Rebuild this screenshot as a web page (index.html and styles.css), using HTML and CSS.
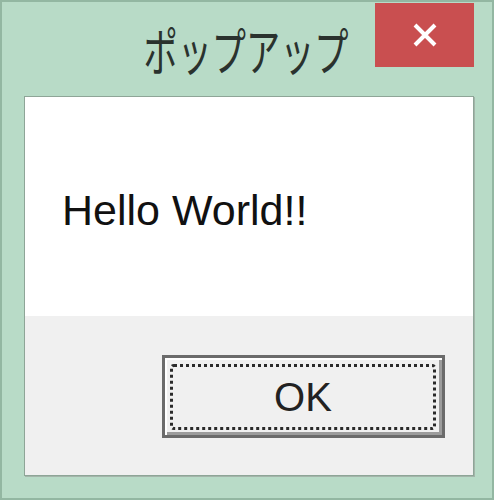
FILE: index.html
```html
<!DOCTYPE html>
<html lang="ja">
<head>
    <meta charset="UTF-8">
    <title>ポップアップ</title>
    <link rel="stylesheet" href="styles.css">
</head>
<body>
    <div class="window">
        <div class="titlebar">
            <div></div>
            <div class="title"><span>ポップアップ</span></div>
            <button class="close-button" aria-label="閉じる">
                <svg width="28" height="24" viewBox="0 0 28 24">
                    <path d="M4 2 L24 22 M24 2 L4 22" stroke="#fff" stroke-width="4" fill="none"/>
                </svg>
            </button>
        </div>

        <div class="client">
            <!-- メッセージ -->
            <div class="message">Hello World!!</div>
            <!-- ボタン -->
            <div class="footer">
                <button class="ok-button"><span>OK</span></button>
            </div>
        </div>
    </div>
</body>
</html>
```

FILE: styles.css
```css
/* スタイル */
body {
    margin: 0;
    padding: 0;
    font-family: "Liberation Sans", Arial, "Noto Sans CJK JP", sans-serif;
}
.window {
    width: 494px;
    height: 500px;
    box-sizing: border-box;
    background-color: #b8dbc7;
    border: 2px solid #93b7a2;
    padding: 0 18px 22px 22px;
    display: flex;
    flex-direction: column;
}
.titlebar {
    height: 94px;
    display: grid;
    grid-template-columns: 1fr auto 1fr;
    align-items: start;
}
.title {
    align-self: center;
    color: #2a322e;
    font-family: "Noto Sans CJK JP", sans-serif;
    font-size: 51px;
    line-height: 1;
    margin-top: 0;
    margin-left: -5px;
    width: 208px;
    text-align: center;
}
.title span {
    display: inline-block;
    transform: scaleX(0.67);
    white-space: nowrap;
    margin: 0 -60px;
}
.close-button {
    justify-self: end;
    width: 99px;
    height: 64px;
    margin-top: 1px;
    background-color: #c94f50;
    border: none;
    padding: 0;
    display: flex;
    align-items: center;
    justify-content: center;
    cursor: pointer;
}
.client {
    height: 380px;
    box-sizing: border-box;
    border: 1px solid #8ea597;
    box-shadow: 1px 1px 0 #a3b5aa;
    display: flex;
    flex-direction: column;
}
.message {
    height: 219px;
    box-sizing: border-box;
    background-color: white;
    padding: 8px 0 0 37px;
    display: flex;
    align-items: center;
    font-size: 43px;
    color: #111;
}
.footer {
    flex: 1;
    background-color: #f0f0f0;
    padding: 39px 28px 0 0;
    display: flex;
    justify-content: flex-end;
    align-items: flex-start;
}
.ok-button {
    width: 283px;
    height: 83px;
    box-sizing: border-box;
    background-color: #f0f0f0;
    border: 3px solid #6b6b6b;
    box-shadow: inset 2px 2px 0 #fff, inset -3px -3px 0 #9c9c9c;
    padding: 6px 6px 5px 5px;
    display: flex;
    cursor: pointer;
    font-family: "Liberation Sans", Arial, sans-serif;
}
.ok-button span {
    flex: 1;
    border: 3px dotted #2a2a2a;
    border-radius: 4px;
    display: flex;
    align-items: center;
    justify-content: center;
    font-size: 40px;
    color: #222;
}
```
